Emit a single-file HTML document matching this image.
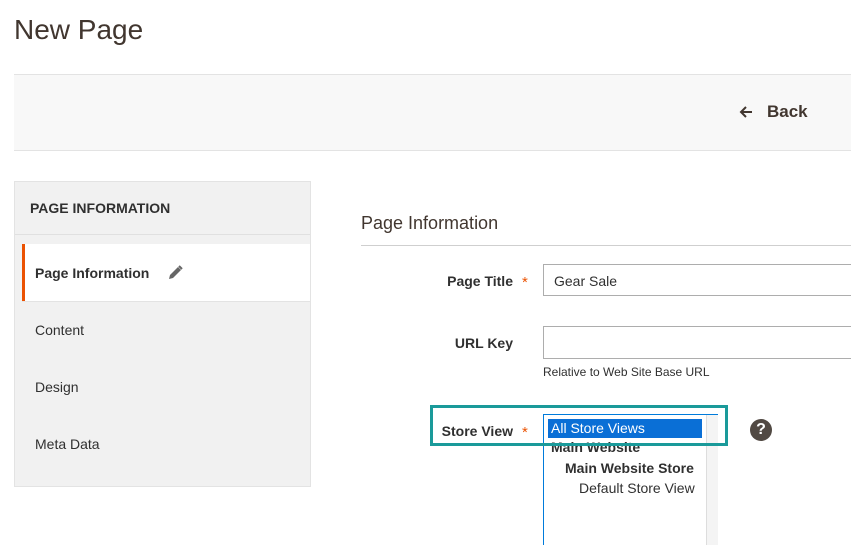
<!DOCTYPE html>
<html><head><style>
html,body{margin:0;width:851px;height:545px;overflow:hidden;background:#fff;font-family:"Liberation Sans",sans-serif;color:#303030;position:relative}
.a{position:absolute}
</style></head><body>
<div class="a" style="left:14px;top:14px;font-size:28px;color:#41362f">New Page</div>
<div class="a" style="left:14px;top:74px;width:840px;height:75px;background:#f8f8f8;border-top:1px solid #e3e3e3;border-bottom:1px solid #e3e3e3"></div>
<svg class="a" style="left:738px;top:104px" width="16" height="16" viewBox="0 0 16 16"><path d="M14 8H3M8 3L3 8l5 5" stroke="#41362f" stroke-width="2" fill="none"/></svg>
<div class="a" style="left:767px;top:102px;font-size:17px;font-weight:bold;color:#41362f">Back</div>

<div class="a" style="left:14px;top:181px;width:295px;height:304px;background:#f1f1f1;border:1px solid #e3e3e3"></div>
<div class="a" style="left:15px;top:234px;width:295px;height:1px;background:#e0e0e0"></div>
<div class="a" style="left:30px;top:200px;font-size:14px;font-weight:bold;color:#303030">PAGE INFORMATION</div>
<div class="a" style="left:22px;top:244px;width:288px;height:57px;background:#fff;border-bottom:1px solid #e3e3e3"></div>
<div class="a" style="left:22px;top:244px;width:3px;height:57px;background:#eb5202"></div>
<div class="a" style="left:35px;top:265px;font-size:14px;font-weight:bold;color:#303030">Page Information</div>
<svg class="a" style="left:167px;top:264px" width="17" height="17" viewBox="0 0 17 17"><path d="M2 15l1-4 8-8 3 3-8 8z" fill="#666"/><path d="M12 2l3 3" stroke="#666" stroke-width="2"/></svg>
<div class="a" style="left:35px;top:322px;font-size:14px">Content</div>
<div class="a" style="left:35px;top:379px;font-size:14px">Design</div>
<div class="a" style="left:35px;top:436px;font-size:14px">Meta Data</div>

<div class="a" style="left:361px;top:213px;font-size:18px;color:#41362f">Page Information</div>
<div class="a" style="left:361px;top:245px;width:490px;height:1px;background:#cfcfcf"></div>

<div class="a" style="left:420px;top:273px;width:93px;text-align:right;font-size:14px;font-weight:bold">Page Title</div>
<div class="a" style="left:522px;top:274px;color:#eb5202;font-size:15px">*</div>
<div class="a" style="left:543px;top:264px;width:320px;height:32px;border:1px solid #adadad;box-sizing:border-box"></div>
<div class="a" style="left:554px;top:273px;font-size:14px">Gear Sale</div>

<div class="a" style="left:420px;top:335px;width:93px;text-align:right;font-size:14px;font-weight:bold">URL Key</div>
<div class="a" style="left:543px;top:326px;width:320px;height:33px;border:1px solid #adadad;box-sizing:border-box"></div>
<div class="a" style="left:543px;top:365px;font-size:12px">Relative to Web Site Base URL</div>

<div class="a" style="left:420px;top:423px;width:93px;text-align:right;font-size:14px;font-weight:bold">Store View</div>
<div class="a" style="left:522px;top:424px;color:#eb5202;font-size:15px">*</div>
<div class="a" style="left:543px;top:414px;width:175px;height:140px;border:1px solid #007bdb;box-sizing:border-box"></div>
<div class="a" style="left:706px;top:415px;width:11px;height:140px;background:#f4f4f4;border-left:1px solid #ddd"></div>
<div class="a" style="left:551px;top:439px;font-size:14px;font-weight:bold">Main Website</div>
<div class="a" style="left:548px;top:419px;width:154px;height:19px;background:#0a6fd6"></div>
<div class="a" style="left:551px;top:420px;font-size:14px;color:#fff">All Store Views</div>
<div class="a" style="left:565px;top:460px;font-size:14px;font-weight:bold">Main Website Store</div>
<div class="a" style="left:579px;top:480px;font-size:14px">Default Store View</div>
<div class="a" style="left:430px;top:405px;width:298px;height:41px;border:3px solid #1a9a9a;box-sizing:border-box"></div>
<div class="a" style="left:750px;top:419px;width:22px;height:22px;border-radius:50%;background:#514943;color:#fff;font-weight:bold;font-size:16px;text-align:center;line-height:22px">?</div>
</body></html>
